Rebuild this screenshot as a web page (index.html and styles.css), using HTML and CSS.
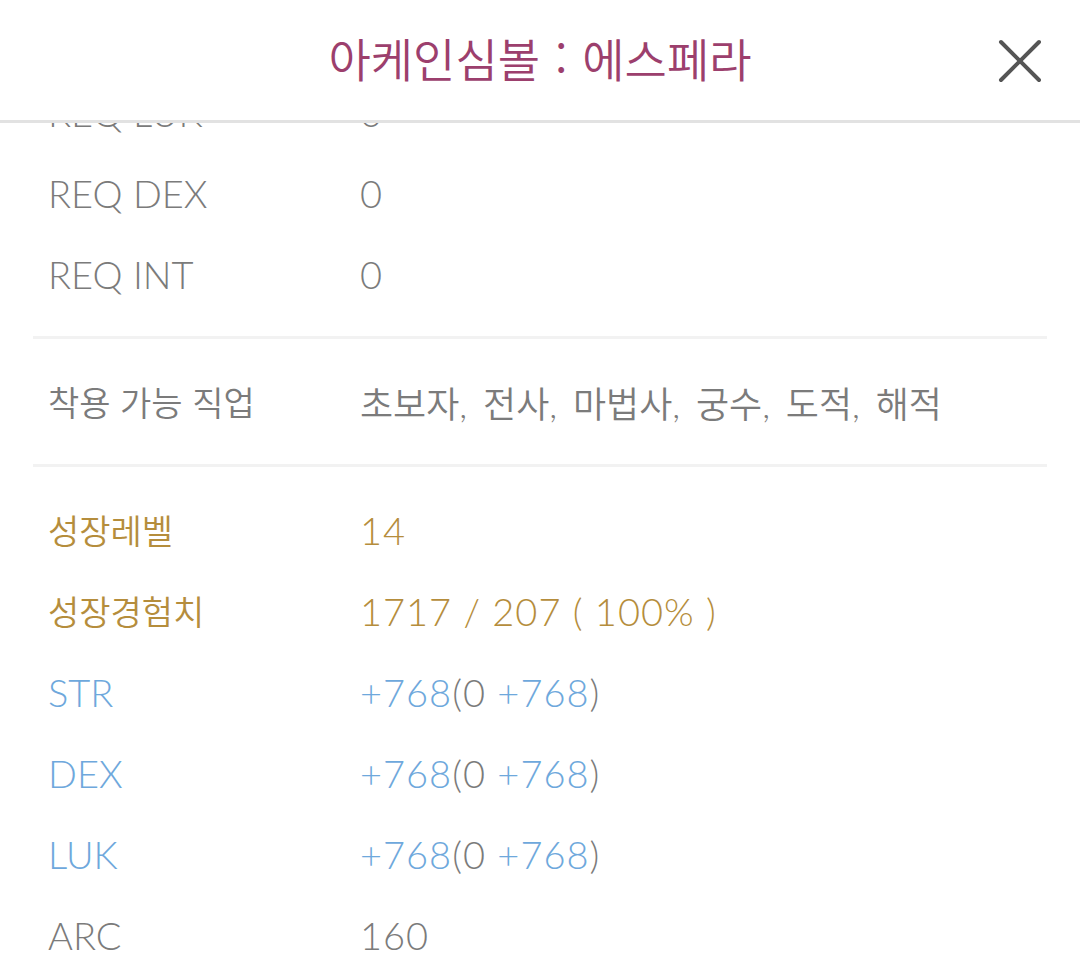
FILE: index.html
```html
<!DOCTYPE html>
<html lang="ko">
<head>
<meta charset="utf-8">
<title>아케인심볼 : 에스페라</title>
<link rel="stylesheet" href="styles.css">
</head>
<body>
<div class="sheet">
  <header class="sheet-header">
    <h1 class="sheet-title">아케인심볼 : 에스페라</h1>
    <button class="close-btn" aria-label="닫기">
      <svg viewBox="0 0 44 44" width="44" height="44">
        <path d="M3 3 L41 41 M41 3 L3 41" stroke="#555555" stroke-width="4" stroke-linecap="round" fill="none"/>
      </svg>
    </button>
  </header>
  <div class="sheet-body">
    <div class="scroll-content">
      <section class="group">
        <div class="row"><span class="label">REQ LUK</span><span class="value">0</span></div>
        <div class="row"><span class="label">REQ DEX</span><span class="value">0</span></div>
        <div class="row"><span class="label">REQ INT</span><span class="value">0</span></div>
      </section>
      <section class="group">
        <div class="row"><span class="label ko">착용 가능 직업</span><span class="value ko">초보자, 전사, 마법사, 궁수, 도적, 해적</span></div>
      </section>
      <section class="group last">
        <div class="row gold"><span class="label ko">성장레벨</span><span class="value">14</span></div>
        <div class="row gold"><span class="label ko">성장경험치</span><span class="value">1717 / 207 ( 100% )</span></div>
        <div class="row blue"><span class="label">STR</span><span class="value">+768<span class="base">(0 </span>+768<span class="base">)</span></span></div>
        <div class="row blue"><span class="label">DEX</span><span class="value">+768<span class="base">(0 </span>+768<span class="base">)</span></span></div>
        <div class="row blue"><span class="label">LUK</span><span class="value">+768<span class="base">(0 </span>+768<span class="base">)</span></span></div>
        <div class="row"><span class="label">ARC</span><span class="value">160</span></div>
      </section>
    </div>
  </div>
</div>
</body>
</html>
```

FILE: styles.css
```css
html, body {
  margin: 0;
  padding: 0;
  background: #ffffff;
}

body {
  font-family: "Lato", "Noto Sans CJK KR", sans-serif;
  font-weight: 300;
  color: #7b7b7b;
}

.sheet {
  width: 1080px;
  height: 960px;
  display: flex;
  flex-direction: column;
  overflow: hidden;
}

.sheet-header {
  height: 120px;
  flex: 0 0 auto;
  border-bottom: 3px solid #e2e2e2;
  display: flex;
  align-items: center;
  justify-content: center;
  position: relative;
  background: #ffffff;
}

.sheet-title {
  margin: 0;
  font-family: "Noto Sans CJK KR", sans-serif;
  font-weight: 350;
  font-size: 46px;
  line-height: 1;
  color: #9c3f6d;
  padding-bottom: 6px;
  word-spacing: 2px;
}

.close-btn {
  position: absolute;
  right: 38px;
  top: 39px;
  width: 44px;
  height: 44px;
  padding: 0;
  border: 0;
  background: transparent;
  display: flex;
}

.sheet-body {
  flex: 1 1 auto;
  overflow: hidden;
}

.scroll-content {
  margin-top: -74px;
}

.group {
  margin: 0 33px;
  padding: 22px 15px;
  border-bottom: 3px solid #f2f2f2;
}

.group.last {
  border-bottom: 0;
}

.row {
  display: flex;
  align-items: center;
  height: 81px;
  font-size: 38px;
}

.label {
  width: 312px;
  flex: 0 0 auto;
  white-space: nowrap;
}

.value {
  white-space: nowrap;
  letter-spacing: 1px;
}

.ko {
  font-family: "Noto Sans CJK KR", sans-serif;
  font-weight: 350;
  font-size: 34px;
}

.value.ko {
  font-family: "Lato", "Noto Sans CJK KR", sans-serif;
  font-size: 36px;
  letter-spacing: 0;
  word-spacing: 6px;
}

.gold {
  color: #b58d3c;
}

.blue {
  color: #6ea8dc;
}

.blue .base {
  color: #7b7b7b;
}
```
